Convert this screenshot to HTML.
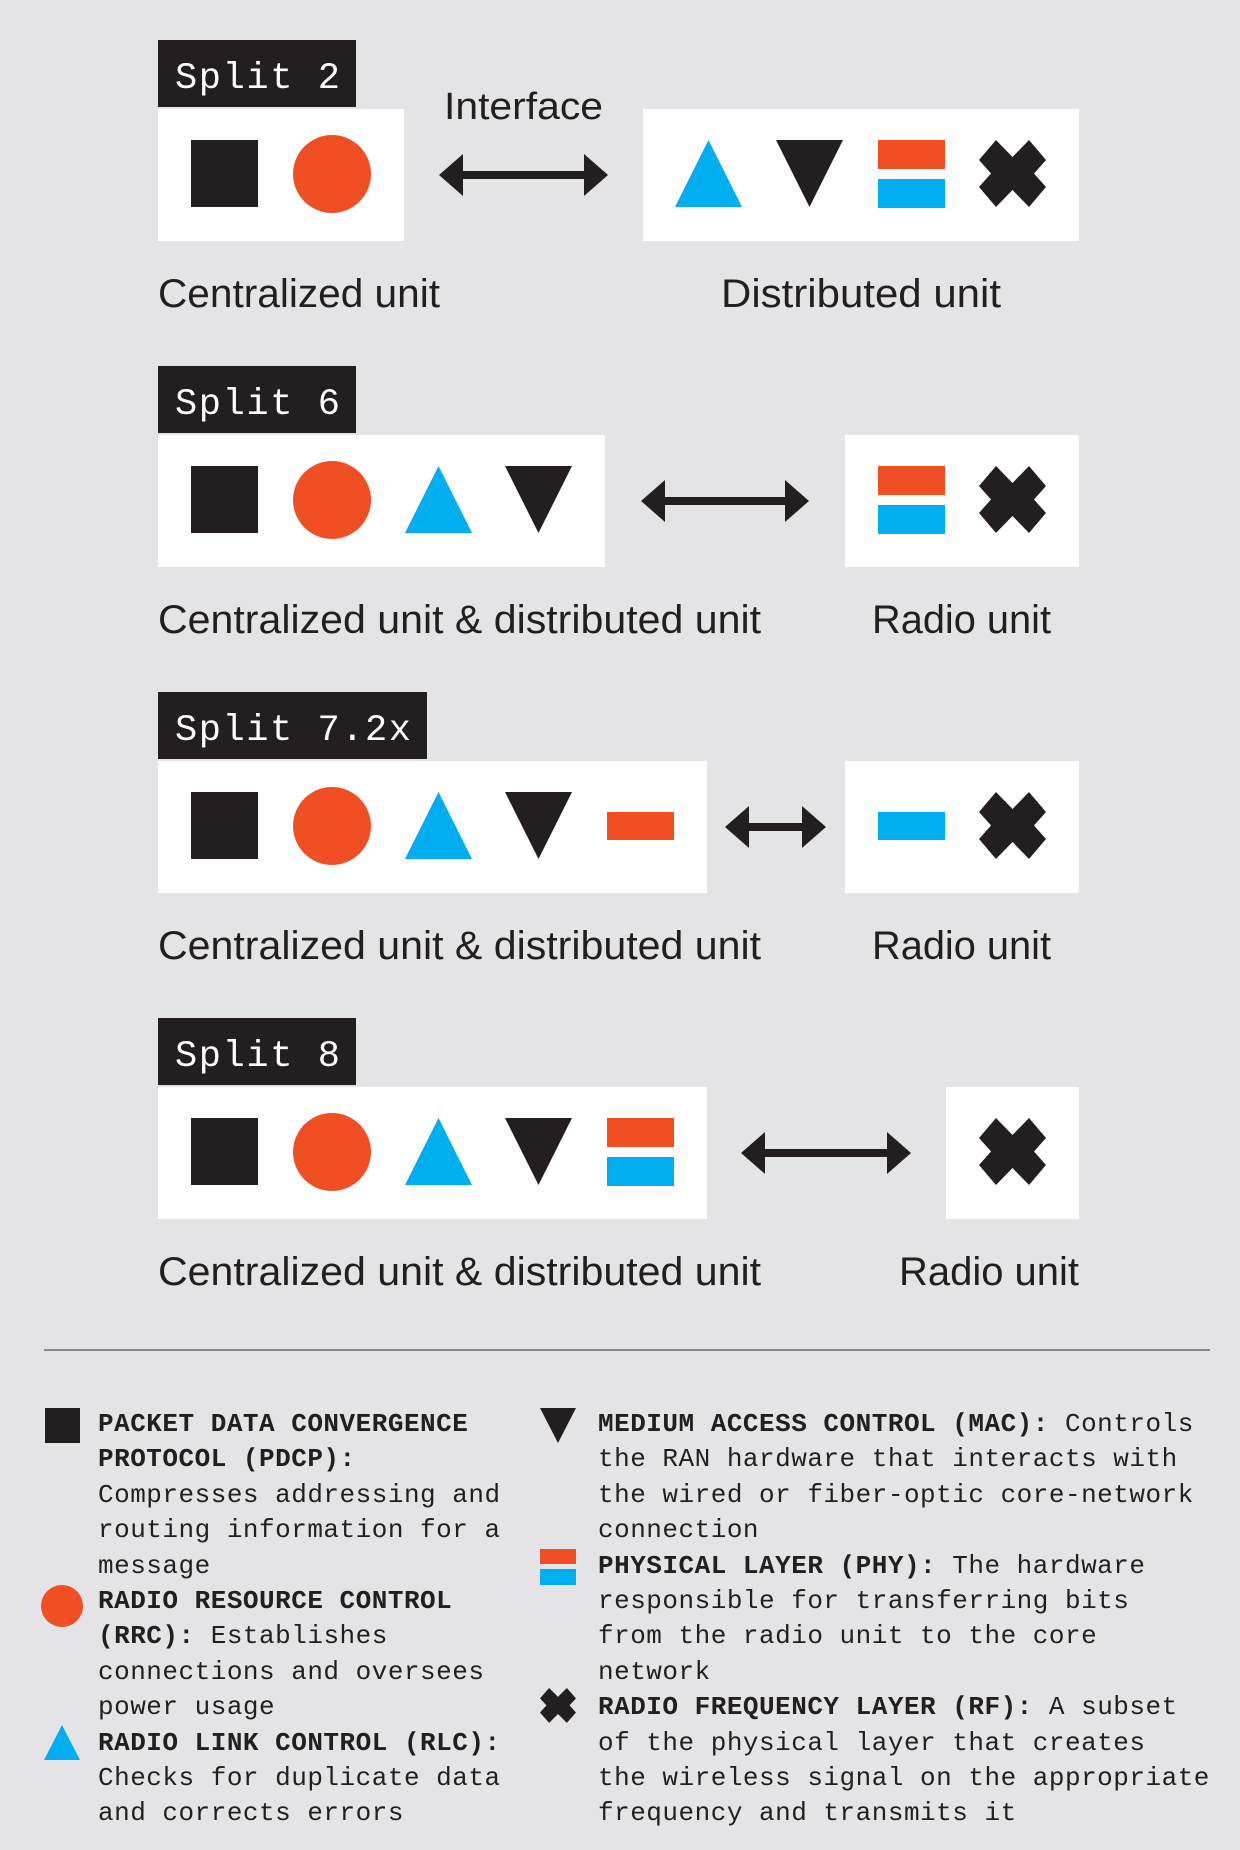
<!DOCTYPE html>
<html><head><meta charset="utf-8"><style>
html,body{margin:0;padding:0;background:#e4e4e6;}
svg{display:block;}
.mono{font-family:"Liberation Mono",monospace;}
.sans{font-family:"Liberation Sans",sans-serif;}
.lg{font-family:"Liberation Mono",monospace;font-size:26px;letter-spacing:0.5px;fill:#231f20;}
.b{font-weight:bold;}
</style></head><body>
<svg width="1240" height="1850" viewBox="0 0 1240 1850" xmlns="http://www.w3.org/2000/svg">
<rect width="1240" height="1850" fill="#e4e4e6"/>

<!-- ===== Split 2 ===== -->
<g>
<rect x="158" y="40" width="198" height="67" fill="#231f20"/>
<text x="175" y="88" class="mono" font-size="37" fill="#fff" textLength="165">Split 2</text>
<rect x="158" y="109" width="246" height="132" fill="#fff"/>
<rect x="191" y="140" width="67" height="67" fill="#231f20"/>
<circle cx="332" cy="174" r="39" fill="#f04e23"/>
<text x="444" y="119" class="sans" font-size="38" fill="#231f20" textLength="159" lengthAdjust="spacingAndGlyphs">Interface</text>
<polygon points="439,175 463,154 463,171 584,171 584,154 608,175 584,196 584,179 463,179 463,196" fill="#231f20"/>
<rect x="643" y="109" width="436" height="132" fill="#fff"/>
<polygon points="708.5,140 742,207 675,207" fill="#00aeef"/>
<polygon points="776,140 843,140 809.5,207" fill="#231f20"/>
<rect x="878" y="140" width="67" height="29" fill="#f04e23"/>
<rect x="878" y="179" width="67" height="29" fill="#00aeef"/>
<polygon transform="translate(979,140)" points="17,0 33.5,17 50,0 67,20 55,33.5 67,47 50,67 33.5,50 17,67 0,47 12,33.5 0,20" fill="#231f20"/>
<text x="158" y="307" class="sans" font-size="40" fill="#231f20" textLength="282" lengthAdjust="spacingAndGlyphs">Centralized unit</text>
<text x="721" y="307" class="sans" font-size="40" fill="#231f20" textLength="280" lengthAdjust="spacingAndGlyphs">Distributed unit</text>
</g>

<!-- ===== Split 6 ===== -->
<g transform="translate(0,326)">
<rect x="158" y="40" width="198" height="67" fill="#231f20"/>
<text x="175" y="88" class="mono" font-size="37" fill="#fff" textLength="165">Split 6</text>
<rect x="158" y="109" width="447" height="132" fill="#fff"/>
<rect x="191" y="140" width="67" height="67" fill="#231f20"/>
<circle cx="332" cy="174" r="39" fill="#f04e23"/>
<polygon points="438.5,140 472,207 405,207" fill="#00aeef"/>
<polygon points="505,140 572,140 538.5,207" fill="#231f20"/>
<polygon points="641,175 665,154 665,171 785,171 785,154 809,175 785,196 785,179 665,179 665,196" fill="#231f20"/>
<rect x="845" y="109" width="234" height="132" fill="#fff"/>
<rect x="878" y="140" width="67" height="29" fill="#f04e23"/>
<rect x="878" y="179" width="67" height="29" fill="#00aeef"/>
<polygon transform="translate(979,140)" points="17,0 33.5,17 50,0 67,20 55,33.5 67,47 50,67 33.5,50 17,67 0,47 12,33.5 0,20" fill="#231f20"/>
<text x="158" y="307" class="sans" font-size="40" fill="#231f20" textLength="603" lengthAdjust="spacingAndGlyphs">Centralized unit &amp; distributed unit</text>
<text x="872" y="307" class="sans" font-size="40" fill="#231f20" textLength="179" lengthAdjust="spacingAndGlyphs">Radio unit</text>
</g>

<!-- ===== Split 7.2x ===== -->
<g transform="translate(0,652)">
<rect x="158" y="40" width="269" height="67" fill="#231f20"/>
<text x="175" y="88" class="mono" font-size="37" fill="#fff" textLength="236">Split 7.2x</text>
<rect x="158" y="109" width="549" height="132" fill="#fff"/>
<rect x="191" y="140" width="67" height="67" fill="#231f20"/>
<circle cx="332" cy="174" r="39" fill="#f04e23"/>
<polygon points="438.5,140 472,207 405,207" fill="#00aeef"/>
<polygon points="505,140 572,140 538.5,207" fill="#231f20"/>
<rect x="607" y="160" width="67" height="28" fill="#f04e23"/>
<polygon points="725,175 749,154 749,171 802,171 802,154 826,175 802,196 802,179 749,179 749,196" fill="#231f20"/>
<rect x="845" y="109" width="234" height="132" fill="#fff"/>
<rect x="878" y="160" width="67" height="28" fill="#00aeef"/>
<polygon transform="translate(979,140)" points="17,0 33.5,17 50,0 67,20 55,33.5 67,47 50,67 33.5,50 17,67 0,47 12,33.5 0,20" fill="#231f20"/>
<text x="158" y="307" class="sans" font-size="40" fill="#231f20" textLength="603" lengthAdjust="spacingAndGlyphs">Centralized unit &amp; distributed unit</text>
<text x="872" y="307" class="sans" font-size="40" fill="#231f20" textLength="179" lengthAdjust="spacingAndGlyphs">Radio unit</text>
</g>

<!-- ===== Split 8 ===== -->
<g transform="translate(0,978)">
<rect x="158" y="40" width="198" height="67" fill="#231f20"/>
<text x="175" y="88" class="mono" font-size="37" fill="#fff" textLength="165">Split 8</text>
<rect x="158" y="109" width="549" height="132" fill="#fff"/>
<rect x="191" y="140" width="67" height="67" fill="#231f20"/>
<circle cx="332" cy="174" r="39" fill="#f04e23"/>
<polygon points="438.5,140 472,207 405,207" fill="#00aeef"/>
<polygon points="505,140 572,140 538.5,207" fill="#231f20"/>
<rect x="607" y="140" width="67" height="29" fill="#f04e23"/>
<rect x="607" y="179" width="67" height="29" fill="#00aeef"/>
<polygon points="741,175 765,154 765,171 887,171 887,154 911,175 887,196 887,179 765,179 765,196" fill="#231f20"/>
<rect x="946" y="109" width="133" height="132" fill="#fff"/>
<polygon transform="translate(979,140)" points="17,0 33.5,17 50,0 67,20 55,33.5 67,47 50,67 33.5,50 17,67 0,47 12,33.5 0,20" fill="#231f20"/>
<text x="158" y="307" class="sans" font-size="40" fill="#231f20" textLength="603" lengthAdjust="spacingAndGlyphs">Centralized unit &amp; distributed unit</text>
<text x="899" y="307" class="sans" font-size="40" fill="#231f20" textLength="180" lengthAdjust="spacingAndGlyphs">Radio unit</text>
</g>

<!-- divider -->
<rect x="44" y="1349" width="1166" height="2" fill="#8a8a8c"/>

<!-- legend icons -->
<rect x="45" y="1408" width="35" height="35" fill="#231f20"/>
<circle cx="62" cy="1606" r="21" fill="#f04e23"/>
<polygon points="62,1725 80,1760 44,1760" fill="#00aeef"/>
<polygon points="540,1408 576,1408 558,1443" fill="#231f20"/>
<rect x="540" y="1549" width="36" height="15" fill="#f04e23"/>
<rect x="540" y="1569" width="36" height="16" fill="#00aeef"/>
<polygon transform="translate(540,1688) scale(0.537,0.52)" points="17,0 33.5,17 50,0 67,20 55,33.5 67,47 50,67 33.5,50 17,67 0,47 12,33.5 0,20" fill="#231f20"/>

<!-- legend text left -->
<text class="lg">
<tspan x="98" y="1431" class="b">PACKET DATA CONVERGENCE</tspan>
<tspan x="98" y="1466" class="b">PROTOCOL (PDCP):</tspan>
<tspan x="98" y="1502">Compresses addressing and</tspan>
<tspan x="98" y="1537">routing information for a</tspan>
<tspan x="98" y="1573">message</tspan>
<tspan x="98" y="1608" class="b">RADIO RESOURCE CONTROL</tspan>
<tspan x="98" y="1643"><tspan class="b">(RRC):</tspan> Establishes</tspan>
<tspan x="98" y="1679">connections and oversees</tspan>
<tspan x="98" y="1714">power usage</tspan>
<tspan x="98" y="1750" class="b">RADIO LINK CONTROL (RLC):</tspan>
<tspan x="98" y="1785">Checks for duplicate data</tspan>
<tspan x="98" y="1820">and corrects errors</tspan>
</text>

<!-- legend text right -->
<text class="lg">
<tspan x="598" y="1431"><tspan class="b">MEDIUM ACCESS CONTROL (MAC):</tspan> Controls</tspan>
<tspan x="598" y="1466">the RAN hardware that interacts with</tspan>
<tspan x="598" y="1502">the wired or fiber-optic core-network</tspan>
<tspan x="598" y="1537">connection</tspan>
<tspan x="598" y="1573"><tspan class="b">PHYSICAL LAYER (PHY):</tspan> The hardware</tspan>
<tspan x="598" y="1608">responsible for transferring bits</tspan>
<tspan x="598" y="1643">from the radio unit to the core</tspan>
<tspan x="598" y="1679">network</tspan>
<tspan x="598" y="1714"><tspan class="b">RADIO FREQUENCY LAYER (RF):</tspan> A subset</tspan>
<tspan x="598" y="1750">of the physical layer that creates</tspan>
<tspan x="598" y="1785">the wireless signal on the appropriate</tspan>
<tspan x="598" y="1820">frequency and transmits it</tspan>
</text>
</svg>
</body></html>
